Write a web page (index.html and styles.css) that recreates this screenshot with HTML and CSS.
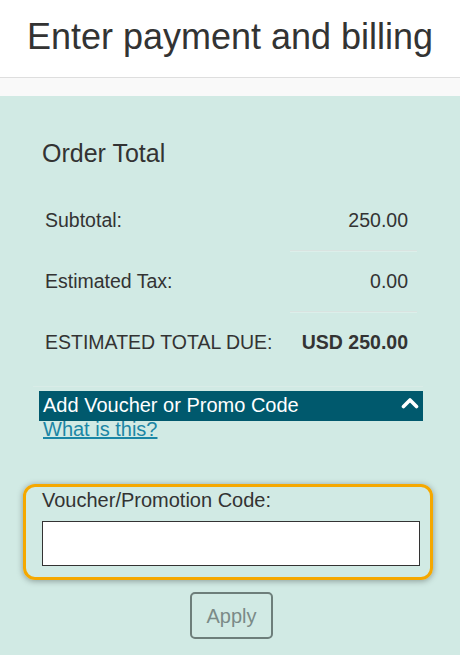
FILE: index.html
```html
<!DOCTYPE html>
<html lang="en">
<head>
<meta charset="utf-8">
<title>Enter payment and billing</title>
<link rel="stylesheet" href="styles.css">
</head>
<body>
<header class="header">
  <h1 class="title">Enter payment and billing</h1>
</header>
<div class="strip"></div>
<main class="panel">
  <h2 class="heading">Order Total</h2>
  <div class="totals">
    <div class="cell label first">Subtotal:</div>
    <div class="cell value first">250.00</div>
    <div class="cell label">Estimated Tax:</div>
    <div class="cell value lined">0.00</div>
    <div class="cell label">ESTIMATED TOTAL DUE:</div>
    <div class="cell value lined strong">USD 250.00</div>
  </div>
  <div class="rule"></div>
  <div class="voucher-bar">
    <span>Add Voucher or Promo Code</span>
    <svg class="chev" width="18" height="12" viewBox="0 0 18 12"><polyline points="2.5,9.5 9,3 15.5,9.5" fill="none" stroke="#fff" stroke-width="3.6" stroke-linecap="round" stroke-linejoin="round"/></svg>
  </div>
  <div class="help"><a href="#" class="help-link">What is this?</a></div>
  <div class="code-box">
    <label class="code-label" for="code">Voucher/Promotion Code:</label>
    <input class="code-input" id="code" type="text">
  </div>
  <div class="actions"><button class="apply" type="button">Apply</button></div>
</main>
</body>
</html>
```

FILE: styles.css
```css
html, body {
  margin: 0;
  padding: 0;
}
body {
  font-family: "Liberation Sans", Arial, sans-serif;
  color: #333;
  background: #d1eae4;
  width: 460px;
  min-height: 655px;
}
.header {
  background: #fff;
  height: 77px;
  border-bottom: 1px solid #dedede;
  box-sizing: content-box;
}
.title {
  margin: 0;
  padding-top: 19px;
  font-size: 36px;
  line-height: 36px;
  font-weight: normal;
  text-align: center;
  color: #333;
}
.strip {
  height: 18px;
  background: #f9f9f9;
}
.panel {
  background: #d1eae4;
  padding-top: 44px;
  padding-bottom: 14px;
}
.heading {
  margin: 0 0 0 42px;
  font-size: 25px;
  line-height: 27px;
  font-weight: normal;
  color: #333;
}
.totals {
  margin: 22px 0 0 36px;
  width: 381px;
  display: grid;
  grid-template-columns: 254px 127px;
}
.cell {
  font-size: 19.5px;
  line-height: 22px;
  padding: 19px 9px;
  border-top: 1px solid transparent;
}
.value {
  text-align: right;
}
.lined {
  border-top-color: #d9e3e0;
  box-shadow: inset 0 1px 0 #dcefea;
}
.strong {
  font-weight: bold;
}
.rule {
  margin: 14px 37px 0 33px;
  height: 1px;
  background: #d9ece7;
}
.voucher-bar {
  margin: 4px 37px 0 39px;
  height: 30px;
  box-sizing: border-box;
  padding: 0 4px 2px 4px;
  background: #00596d;
  color: #fff;
  font-size: 20px;
  line-height: 28px;
  display: flex;
  justify-content: space-between;
  align-items: center;
}
.chev {
  display: block;
  margin-bottom: 4px;
}
.help {
  margin-left: 43px;
  font-size: 20px;
  line-height: 16px;
}
.help-link {
  color: #1b86a5;
  text-decoration: underline;
}
.code-box {
  margin: 47px 27px 0 23px;
  border: 3px solid #f5a800;
  border-radius: 12px;
  box-shadow: 0 1px 6px rgba(0, 0, 0, 0.35);
  padding: 2px 10px 11px 16px;
  display: flex;
  flex-direction: column;
}
.code-label {
  font-size: 20px;
  line-height: 22px;
  color: #333;
}
.code-input {
  margin-top: 10px;
  height: 45px;
  box-sizing: border-box;
  border: 1px solid #333;
  background: #fff;
  padding: 0 6px;
  font-family: inherit;
  font-size: 20px;
  width: 378px;
  outline: none;
}
.actions {
  margin-top: 12px;
  display: flex;
  justify-content: center;
  padding-left: 3px;
}
.apply {
  height: 47px;
  width: 83px;
  box-sizing: border-box;
  border: 2px solid #6d7e7a;
  border-radius: 5px;
  background: transparent;
  color: #7b8a87;
  font-family: inherit;
  font-size: 20px;
  line-height: 41px;
  padding: 2px 0 0 0;
}
```
